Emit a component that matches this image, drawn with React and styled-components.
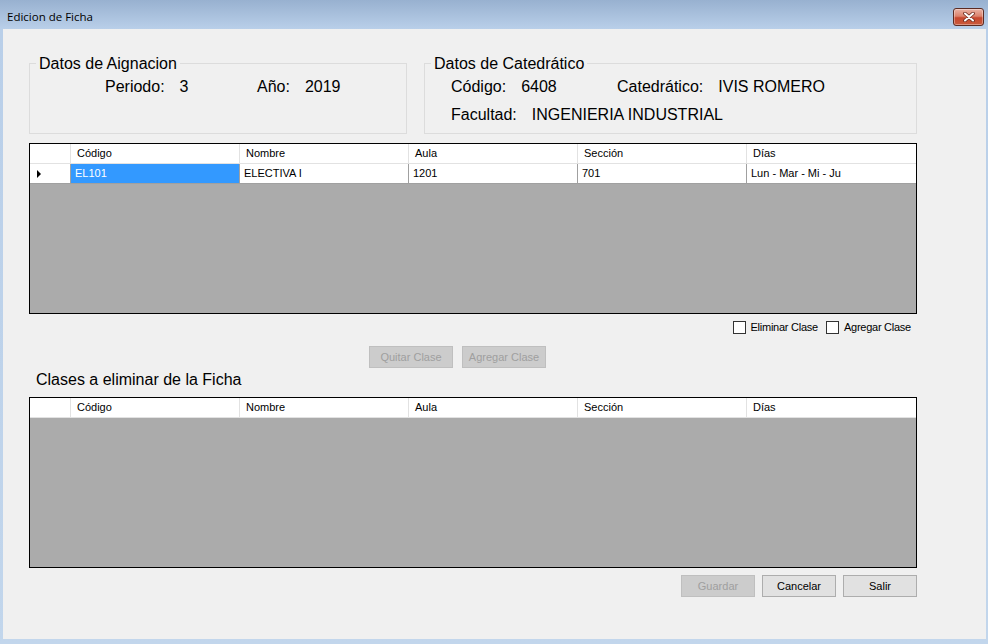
import React from 'react';
import styled, { createGlobalStyle } from 'styled-components';

const GlobalStyle = createGlobalStyle`
  body {
    margin: 0;
    overflow: hidden;
    background: #c1d5ec;
  }
`;

const columns = ['Código', 'Nombre', 'Aula', 'Sección', 'Días'];

const rows = [
  { codigo: 'EL101', nombre: 'ELECTIVA I', aula: '1201', seccion: '701', dias: 'Lun - Mar - Mi - Ju' },
];

const Window = styled.div`
  width: 988px;
  height: 644px;
  display: flex;
  flex-direction: column;
  background: linear-gradient(to bottom, #98b1d0 0px, #b9cfe9 29px, #c2d6ec 100%);
`;

const TitleBar = styled.div`
  height: 29px;
  box-sizing: border-box;
  padding: 8px 4px 0 7px;
  display: flex;
  justify-content: space-between;
  align-items: flex-start;
`;

const Title = styled.span`
  font-family: "Open Sans", "Liberation Sans", sans-serif;
  font-size: 11.5px;
  line-height: 18px;
  color: #000;
`;

const CloseButton = styled.div`
  width: 31px;
  height: 18px;
  box-sizing: border-box;
  border: 1px solid #5c2b22;
  border-radius: 3px;
  background: linear-gradient(to bottom, #eab3a5 0%, #dc826c 45%, #c7472e 55%, #c95a3c 100%);
  box-shadow: inset 0 0 0 1px rgba(255, 255, 255, 0.35);
  display: flex;
  align-items: center;
  justify-content: center;
`;

const Frame = styled.div`
  flex: 1;
  display: flex;
  padding: 0 2px 5px 3px;
`;

const Client = styled.div`
  flex: 1;
  background: #f0f0f0;
  padding: 24px 69px 0 26px;
  display: flex;
  flex-direction: column;
  font-family: "Liberation Sans", Arial, sans-serif;
  color: #000;
`;

const GroupRow = styled.div`
  display: flex;
  gap: 17px;
`;

const Group = styled.fieldset`
  width: ${p => p.$w}px;
  height: 81px;
  box-sizing: border-box;
  margin: 0;
  padding: 4px 0 0 6px;
  border: 1px solid #dcdcdc;
  min-width: 0;
`;

const Legend = styled.legend`
  padding: 2px 3px 0;
  font-size: 16px;
  line-height: 18px;
`;

const FieldLine = styled.div`
  display: flex;
  height: 20px;
  line-height: 20px;
  font-size: 16px;
  padding-left: ${p => p.$pad}px;
  margin-top: ${p => p.$mt || 0}px;
`;

const Field = styled.div`
  display: flex;
  width: ${p => (p.$w ? `${p.$w}px` : 'auto')};
  white-space: nowrap;
`;

const FieldLabel = styled.span`
  margin-right: 15px;
`;

const Grid = styled.div`
  margin-top: ${p => p.$mt}px;
  height: 171px;
  box-sizing: border-box;
  border: 1px solid #000;
  background: #ababab;
`;

const GridRow = styled.div`
  display: grid;
  grid-template-columns: 41px repeat(5, 1fr);
  height: 20px;
`;

const Cell = styled.div`
  box-sizing: border-box;
  background: ${p => (p.$selected ? '#3399ff' : '#fff')};
  color: ${p => (p.$selected ? '#fff' : '#000')};
  border-right: 1px solid ${p => (p.$header ? '#e2e2e2' : '#a0a0a0')};
  border-bottom: 1px solid ${p => (p.$header ? '#e2e2e2' : '#a0a0a0')};
  padding-left: ${p => (p.$header ? 6 : 4)}px;
  font-size: 11px;
  line-height: 19px;
  white-space: nowrap;
  overflow: hidden;

  &:last-child {
    border-right: none;
  }
`;

const RowHeadCell = styled(Cell)`
  display: flex;
  align-items: center;
  padding-left: 7px;
`;

const Arrow = styled.span`
  width: 0;
  height: 0;
  border-left: 4px solid #000;
  border-top: 4px solid transparent;
  border-bottom: 4px solid transparent;
`;

const CheckRow = styled.div`
  margin-top: 5px;
  height: 16px;
  display: flex;
  justify-content: flex-end;
  align-items: center;
  gap: 8px;
  padding-right: 6px;
`;

const CheckLabel = styled.label`
  display: flex;
  align-items: center;
  gap: 5px;
  font-size: 11px;
  letter-spacing: -0.25px;
`;

const CheckBox = styled.span`
  width: 13px;
  height: 13px;
  box-sizing: border-box;
  border: 1px solid #333;
  background: #fff;
`;

const ButtonRow = styled.div`
  display: flex;
  gap: ${p => p.$gap}px;
  margin-top: ${p => p.$mt}px;
  justify-content: ${p => (p.$end ? 'flex-end' : 'flex-start')};
  padding-left: ${p => p.$pad || 0}px;
`;

const Button = styled.button`
  width: ${p => p.$w}px;
  height: 22px;
  box-sizing: border-box;
  border: 1px solid #adadad;
  background: #e1e1e1;
  color: #000;
  font-family: "Liberation Sans", Arial, sans-serif;
  font-size: 11px;
  padding: 0;

  &:disabled {
    background: #cccccc;
    border-color: #bfbfbf;
    color: #9f9f9f;
  }
`;

const SectionTitle = styled.div`
  margin-top: 3px;
  padding-left: 7px;
  font-size: 16px;
  line-height: 18px;
`;

const DataGrid = ({ data, mt }) => (
  <Grid $mt={mt}>
    <GridRow>
      <Cell $header />
      {columns.map(c => (
        <Cell $header key={c}>{c}</Cell>
      ))}
    </GridRow>
    {data.map(r => (
      <GridRow key={r.codigo}>
        <RowHeadCell><Arrow /></RowHeadCell>
        <Cell $selected>{r.codigo}</Cell>
        <Cell>{r.nombre}</Cell>
        <Cell>{r.aula}</Cell>
        <Cell>{r.seccion}</Cell>
        <Cell>{r.dias}</Cell>
      </GridRow>
    ))}
  </Grid>
);

export default function App() {
  return (
    <>
      <GlobalStyle />
      <Window>
        <TitleBar>
          <Title>Edicion de Ficha</Title>
          <CloseButton>
            <svg width="12" height="10" viewBox="0 0 12 10">
              <path d="M2 1.5 L10 8.5 M10 1.5 L2 8.5" stroke="#6b2a1e" strokeWidth="3.6" strokeLinecap="round" />
              <path d="M2 1.5 L10 8.5 M10 1.5 L2 8.5" stroke="#fff" strokeWidth="2" strokeLinecap="round" />
            </svg>
          </CloseButton>
        </TitleBar>
        <Frame>
          <Client>
            <GroupRow>
              <Group $w={378}>
                <Legend>Datos de Aignacion</Legend>
                <FieldLine $pad={69}>
                  <Field $w={152}><FieldLabel>Periodo:</FieldLabel>3</Field>
                  <Field><FieldLabel>Año:</FieldLabel>2019</Field>
                </FieldLine>
              </Group>
              <Group $w={493}>
                <Legend>Datos de Catedrático</Legend>
                <FieldLine $pad={20}>
                  <Field $w={166}><FieldLabel>Código:</FieldLabel>6408</Field>
                  <Field><FieldLabel>Catedrático:</FieldLabel>IVIS ROMERO</Field>
                </FieldLine>
                <FieldLine $pad={20} $mt={8}>
                  <Field><FieldLabel>Facultad:</FieldLabel>INGENIERIA INDUSTRIAL</Field>
                </FieldLine>
              </Group>
            </GroupRow>

            <DataGrid data={rows} mt={9} />

            <CheckRow>
              <CheckLabel><CheckBox />Eliminar Clase</CheckLabel>
              <CheckLabel><CheckBox />Agregar Clase</CheckLabel>
            </CheckRow>

            <ButtonRow $gap={9} $mt={11} $pad={340}>
              <Button $w={84} disabled>Quitar Clase</Button>
              <Button $w={84} disabled>Agregar Clase</Button>
            </ButtonRow>

            <SectionTitle>Clases a eliminar de la Ficha</SectionTitle>

            <DataGrid data={[]} mt={8} />

            <ButtonRow $gap={7} $mt={7} $end>
              <Button $w={74} disabled>Guardar</Button>
              <Button $w={74}>Cancelar</Button>
              <Button $w={74}>Salir</Button>
            </ButtonRow>
          </Client>
        </Frame>
      </Window>
    </>
  );
}
